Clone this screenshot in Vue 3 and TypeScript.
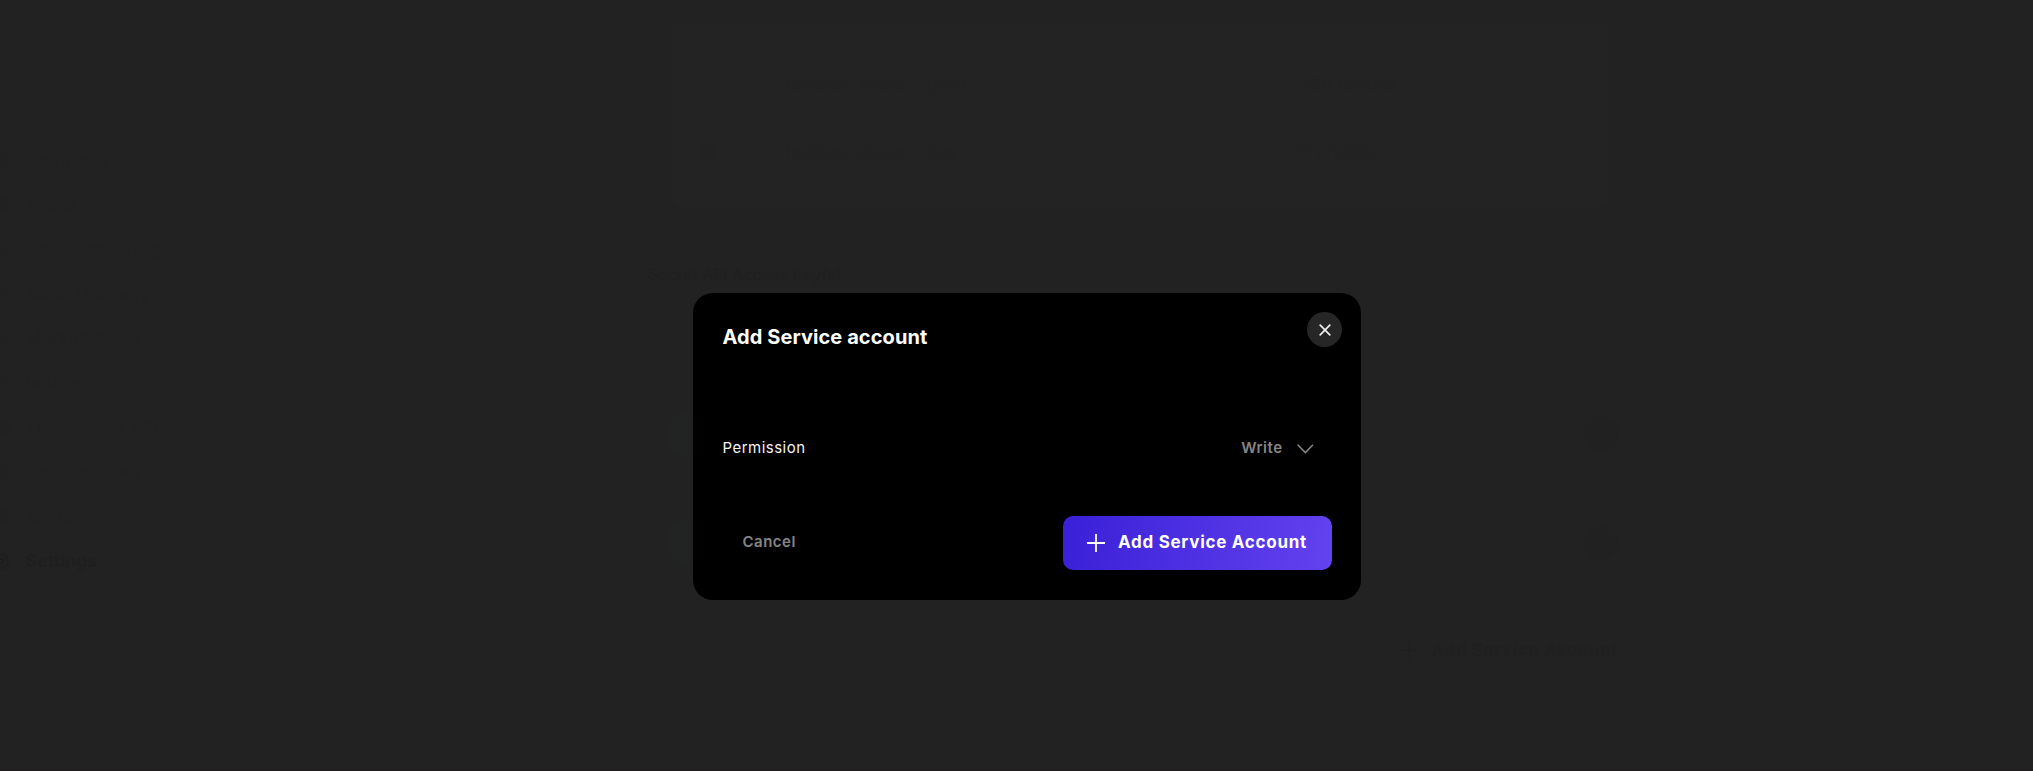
<script setup lang="ts">
interface NavItem { label: string; active?: boolean }
interface Project { name: string; credits: string; selected?: boolean }

const projects: Project[] = [
  { name: 'footbox-maze - prod', credits: '250 credits' },
  { name: 'footbox-maze - dev', credits: '0 credits', selected: true },
]
const nav: NavItem[] = [
  { label: 'Contracts' },
  { label: 'Wallet' },
  { label: 'Gas Sponsoring' },
  { label: 'Node Gateway' },
  { label: 'Marketplaces' },
  { label: 'Indexer' },
  { label: 'Transaction API' },
  { label: 'Collaborators' },
  { label: 'Minter' },
  { label: 'Settings', active: true },
]
const permission = 'Write'
</script>

<template>
  <div class="screen">
    <aside class="sidebar">
      <div v-for="item in nav" :key="item.label" class="nav" :class="{ active: item.active }">
        <svg width="20" height="20" viewBox="0 0 20 20" fill="none" stroke="currentColor" stroke-width="2">
          <circle cx="10" cy="10" r="7" /><circle cx="10" cy="10" r="2.5" />
        </svg>
        <span>{{ item.label }}</span>
      </div>
    </aside>
    <main class="content">
      <section class="card">
        <div v-for="p in projects" :key="p.name" class="project">
          <span class="radio" :class="{ on: p.selected }"></span>
          <span class="name">{{ p.name }}</span>
          <span>{{ p.credits }}</span>
        </div>
      </section>
      <h2 class="heading">Secret API Access Key(s)</h2>
      <div class="rows">
        <div v-for="n in 2" :key="n" class="row">
          <span class="avatar"></span>
          <span class="remove"></span>
        </div>
      </div>
      <div class="ghost-add">
        <svg width="18" height="18" viewBox="0 0 18 18" stroke="currentColor" stroke-width="1.5"><path d="M9 0V18M0 9H18" /></svg>
        <span>Add Service Account</span>
      </div>
    </main>

    <div class="overlay">
      <div class="modal" role="dialog">
        <header class="head">
          <h1>Add Service account</h1>
          <button class="close" aria-label="Close">
            <svg width="12" height="12" viewBox="0 0 12 12" fill="none" stroke="#eee" stroke-width="1.7" stroke-linecap="round"><path d="M1.2 1.2L10.8 10.8M10.8 1.2L1.2 10.8" /></svg>
          </button>
        </header>
        <div class="field">
          <span class="label">Permission</span>
          <div class="select">
            <span>{{ permission }}</span>
            <svg class="chevron" width="17" height="10" viewBox="0 0 17 10" fill="none" stroke="currentColor" stroke-width="1.6"><path d="M.7 .8L8.3 8.5L16 .8" /></svg>
          </div>
        </div>
        <footer class="actions">
          <button class="cancel">Cancel</button>
          <button class="submit">
            <svg width="18" height="18" viewBox="0 0 18 18" fill="none" stroke="#fff" stroke-width="1.8"><path d="M9 0V18M0 9H18" /></svg>
            <span>Add Service Account</span>
          </button>
        </footer>
      </div>
    </div>
  </div>
</template>

<style>
body { background: #222; }
</style>

<style scoped>
* { box-sizing: border-box; }
.screen {
  position: relative;
  display: flex;
  width: 2033px;
  height: 771px;
  overflow: hidden;
  background: #222;
  border-bottom: 1px solid #201a1d;
  font-family: Inter, "Liberation Sans", sans-serif;
  color: #212121;
}
button { border: 0; padding: 0; background: none; font: inherit; }
.sidebar { width: 648px; padding-top: 149px; }
.nav { display: flex; align-items: center; gap: 15px; height: 22px; margin: 0 0 22.6px -9px; font-size: 17px; letter-spacing: .5px; }
.nav.active { font-weight: 600; color: #1f1f1f; }
.content { width: 970px; padding-top: 25px; }
.card { width: 937px; height: 183px; margin-left: 24px; padding: 45px 28px 0; border-radius: 0 0 10px 10px; background: #232323; color: #222; }
.project { display: flex; align-items: center; height: 30px; margin-bottom: 37px; font-size: 17px; letter-spacing: .8px; }
.radio { width: 18px; height: 18px; margin-right: 67px; border-radius: 50%; }
.radio.on { background: #222; }
.name { width: 514px; }
.heading { margin: 54px 0 0; font-size: 16px; line-height: 24px; font-weight: 500; letter-spacing: 0; color: #202020; }
.rows { margin-top: 124px; display: flex; flex-direction: column; gap: 61px; }
.row { display: flex; align-items: center; justify-content: space-between; height: 48px; padding: 0 0 0 19px; }
.avatar { width: 48px; height: 48px; border-radius: 50%; background: #222423; }
.remove { width: 34px; height: 34px; border-radius: 50%; background: #212121; }
.ghost-add { display: flex; align-items: center; justify-content: flex-end; gap: 13px; margin-top: 73px; font-size: 17px; font-weight: 700; letter-spacing: .6px; color: #202020; }

.overlay { position: absolute; inset: 0; padding: 293px 0 0 693px; }
.modal { width: 668px; height: 306.5px; padding: 19px 29px 30px 29.5px; border-radius: 20px; background: #000; display: flex; flex-direction: column; }
.head { display: flex; justify-content: space-between; height: 50px; margin-right: -10px; }
h1 { margin: 10px 0 0; font-size: 20px; line-height: 30px; font-weight: 700; letter-spacing: .08px; color: #fff; white-space: nowrap; }
.close { display: flex; align-items: center; justify-content: center; width: 35px; height: 35px; border-radius: 50%; background: #262626; }
.field { display: flex; align-items: center; justify-content: space-between; height: 30px; margin-top: 70px; padding-right: 18px; }
.label { font-size: 15px; font-weight: 400; letter-spacing: .48px; color: #f4f4f4; }
.select { display: flex; align-items: center; gap: 14.5px; font-size: 15px; font-weight: 600; letter-spacing: .5px; color: #858585; }
.chevron { margin-top: 4px; }
.actions { display: flex; align-items: center; justify-content: space-between; margin-top: auto; }
.cancel { padding: 0 0 2px 20px; font-size: 15px; font-weight: 600; letter-spacing: .5px; color: #858585; }
.submit { display: flex; align-items: center; gap: 13px; width: 269px; height: 54px; padding-left: 24px; border-radius: 10px; background: linear-gradient(100deg, #3920d7, #6342ef); font-size: 17px; font-weight: 700; letter-spacing: .72px; color: #fff; white-space: nowrap; }
.submit span { padding-bottom: 2px; }
</style>
